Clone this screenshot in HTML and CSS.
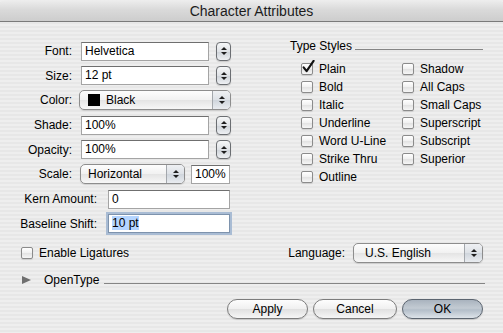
FILE: index.html
```html
<!DOCTYPE html>
<html lang="en">
<head>
    <meta charset="UTF-8">
    <title>Character Attributes</title>
    <link rel="stylesheet" href="styles.css">
</head>
<body>
    <div class="window">
        <div class="titlebar">Character Attributes</div>

        <div class="content">
            <div class="top">
                <!-- left: text attributes -->
                <div class="fields">
                    <div class="row">
                        <span class="lbl">Font:</span>
                        <div class="input main">Helvetica</div>
                        <span class="stepper"><span class="updown"></span></span>
                    </div>
                    <div class="row">
                        <span class="lbl">Size:</span>
                        <div class="input main">12 pt</div>
                        <span class="stepper"><span class="updown"></span></span>
                    </div>
                    <div class="row">
                        <span class="lbl">Color:</span>
                        <div class="popup color">
                            <span class="popup-label"><span class="swatch"></span>Black</span>
                            <span class="popup-arrows"><span class="updown"></span></span>
                        </div>
                    </div>
                    <div class="row">
                        <span class="lbl">Shade:</span>
                        <div class="input main">100%</div>
                        <span class="stepper"><span class="updown"></span></span>
                    </div>
                    <div class="row">
                        <span class="lbl">Opacity:</span>
                        <div class="input main">100%</div>
                        <span class="stepper"><span class="updown"></span></span>
                    </div>
                    <div class="row">
                        <span class="lbl">Scale:</span>
                        <div class="popup scale">
                            <span class="popup-label">Horizontal</span>
                            <span class="popup-arrows"><span class="updown"></span></span>
                        </div>
                        <div class="input small">100%</div>
                    </div>
                    <div class="row">
                        <span class="lbl long">Kern Amount:</span>
                        <div class="input long">0</div>
                    </div>
                    <div class="row">
                        <span class="lbl long">Baseline Shift:</span>
                        <div class="input long focused"><span class="selected">10 pt</span></div>
                    </div>
                </div>

                <!-- right: type styles -->
                <div class="styles">
                    <div class="group-title">
                        <span>Type Styles</span>
                        <span class="rule"></span>
                    </div>
                    <div class="checks">
                        <div class="check">
                            <span class="box">
                                <svg class="tick" width="15" height="15" viewBox="0 0 15 15">
                                    <path d="M2.6 7.4 L5.6 11.2 L12.6 0.8" fill="none" stroke="#111" stroke-width="2.1" stroke-linecap="round" stroke-linejoin="round"/>
                                </svg>
                            </span>Plain
                        </div>
                        <div class="check"><span class="box"></span>Bold</div>
                        <div class="check"><span class="box"></span>Italic</div>
                        <div class="check"><span class="box"></span>Underline</div>
                        <div class="check"><span class="box"></span>Word U-Line</div>
                        <div class="check"><span class="box"></span>Strike Thru</div>
                        <div class="check"><span class="box"></span>Outline</div>
                        <div class="check"><span class="box"></span>Shadow</div>
                        <div class="check"><span class="box"></span>All Caps</div>
                        <div class="check"><span class="box"></span>Small Caps</div>
                        <div class="check"><span class="box"></span>Superscript</div>
                        <div class="check"><span class="box"></span>Subscript</div>
                        <div class="check"><span class="box"></span>Superior</div>
                    </div>
                </div>
            </div>

            <div class="options">
                <div class="check ligatures"><span class="box"></span>Enable Ligatures</div>
                <div class="language">
                    <span class="lang-lbl">Language:</span>
                    <div class="popup lang">
                        <span class="popup-label">U.S. English</span>
                        <span class="popup-arrows"><span class="updown"></span></span>
                    </div>
                </div>
            </div>

            <div class="disclosure">
                <span class="triangle"></span>
                <span>OpenType</span>
                <span class="rule"></span>
            </div>

            <div class="buttons">
                <button class="btn apply">Apply</button>
                <button class="btn cancel">Cancel</button>
                <button class="btn default">OK</button>
            </div>
        </div>
    </div>
</body>
</html>
```

FILE: styles.css
```css
body {
    margin: 0;
    background: #fff;
    font-family: "Lucida Grande", "Liberation Sans", Arial, sans-serif;
    font-size: 12px;
    color: #000;
}

.window {
    width: 503px;
    height: 333px;
    overflow: hidden;
    background: repeating-linear-gradient(180deg, #eeeeee 0, #eeeeee 2px, #e7e7e7 2px, #e7e7e7 4px);
}

.titlebar {
    height: 21px;
    line-height: 22px;
    border-bottom: 1px solid #7a7a7a;
    border-radius: 5px 5px 0 0;
    background: linear-gradient(#eeeeee, #dadada 45%, #cdcdcd);
    text-align: center;
    font-size: 14px;
    color: #1c1c1c;
}

.content {
    padding: 19px 20px 0 20px;
}

.top {
    display: flex;
    justify-content: space-between;
}

/* left column */
.fields {
    display: flex;
    flex-direction: column;
    row-gap: 4.7px;
    width: 211px;
}

.row {
    display: flex;
    align-items: center;
    height: 20px;
}

.lbl {
    flex: none;
    width: 52px;
    margin-right: 9px;
    text-align: right;
}

.lbl.long {
    width: 77px;
    margin-right: 11px;
}

.input {
    box-sizing: border-box;
    height: 19px;
    line-height: 17px;
    padding: 0 3px;
    background: #fff;
    border: 1px solid #a4a4a4;
    border-top-color: #6f6f6f;
    white-space: nowrap;
}

.input.main { width: 128px; }
.input.small { width: 39px; margin-left: 6px; }
.input.long { width: 122px; }

.input.focused {
    border-color: #7e93ad;
    box-shadow: 0 0 0 2px #a9bcd4;
}

.selected {
    background: #b5d5ff;
}

.stepper {
    box-sizing: border-box;
    width: 15px;
    height: 19px;
    margin-left: 7px;
    display: flex;
    align-items: center;
    justify-content: center;
    border: 1px solid #6b6e72;
    border-radius: 4px;
    background: linear-gradient(#f6f7f8, #dfe2e6 50%, #cdd2d8 51%, #eef0f3);
    box-shadow: 0 1px 1px rgba(0,0,0,0.15);
}

/* up/down arrows shared by steppers and popups */
.updown {
    display: flex;
    flex-direction: column;
    align-items: center;
    gap: 2px;
}

.updown::before,
.updown::after {
    content: "";
    width: 0;
    height: 0;
    border-left: 3px solid transparent;
    border-right: 3px solid transparent;
}

.updown::before { border-bottom: 3px solid #1e1e1e; }
.updown::after { border-top: 3px solid #1e1e1e; }

.popup {
    box-sizing: border-box;
    height: 20px;
    display: flex;
    align-items: stretch;
    border: 1px solid #8d8d8d;
    border-radius: 5px;
    background: linear-gradient(#fdfdfd, #f1f1f1 50%, #e4e4e4 51%, #f7f7f7);
    box-shadow: 0 1px 1px rgba(0,0,0,0.12);
}

.popup-label {
    flex: 1;
    display: flex;
    align-items: center;
    padding-left: 7px;
    white-space: nowrap;
}

.popup-arrows {
    width: 17px;
    display: flex;
    align-items: center;
    justify-content: center;
    border-left: 1px solid #a3a7ac;
    border-radius: 0 4px 4px 0;
    background: linear-gradient(#eef0f3, #dde1e6 50%, #cfd5dc 51%, #e9ecf0);
}

.popup.color { width: 152px; margin-left: -2px; }
.popup.scale { width: 105px; margin-left: -1px; }
.popup.lang { width: 130px; }
.popup.lang .popup-label { padding-left: 11px; }

.swatch {
    width: 12px;
    height: 12px;
    background: #000;
    margin: 0 6px 0 1px;
}

/* right column */
.styles {
    width: 193px;
    margin-top: -2px;
}

.group-title {
    display: flex;
    align-items: baseline;
    height: 14px;
    line-height: 14px;
}

.group-title .rule {
    flex: 1;
    margin-left: 3px;
    border-bottom: 1px solid #858585;
}

.checks {
    display: grid;
    grid-template-rows: repeat(7, 18px);
    grid-template-columns: 101px auto;
    grid-auto-flow: column;
    margin-top: 7px;
    padding-left: 11px;
}

.check {
    display: flex;
    align-items: center;
    white-space: nowrap;
}

.box {
    flex: none;
    position: relative;
    box-sizing: border-box;
    width: 12px;
    height: 12px;
    margin-right: 6px;
    border: 1px solid #8b8b8b;
    border-radius: 2px;
    background: linear-gradient(#ffffff, #f0f0f0 50%, #e2e2e2 51%, #f6f6f6);
    box-shadow: 0 1px 1px rgba(0,0,0,0.12);
}

.tick {
    position: absolute;
    left: -1px;
    top: -4px;
}

/* bottom area */
.options {
    display: flex;
    justify-content: space-between;
    align-items: center;
    height: 20px;
    margin-top: 9px;
}

.ligatures {
    margin-left: 1px;
}

.language {
    display: flex;
    align-items: center;
}

.lang-lbl {
    margin-right: 8px;
}

.disclosure {
    display: flex;
    align-items: center;
    height: 20px;
    margin-top: 7px;
    margin-right: -2px;
}

.triangle {
    width: 0;
    height: 0;
    margin: 0 13px 0 2px;
    border-left: 9px solid #6f6f6f;
    border-top: 4.5px solid transparent;
    border-bottom: 4.5px solid transparent;
}

.disclosure .rule {
    flex: 1;
    height: 1px;
    margin: 7px 0 0 5px;
    background: #858585;
}

.buttons {
    display: flex;
    justify-content: flex-end;
    gap: 5px;
    margin-top: 9px;
}

.btn {
    box-sizing: border-box;
    height: 20px;
    padding: 0;
    font-family: inherit;
    font-size: 12px;
    line-height: 18px;
    color: #000;
    border: 1px solid #7c7c7c;
    border-radius: 10px;
    background: linear-gradient(#fdfdfd, #f0f0f0 50%, #e0e0e0 51%, #f6f6f6);
    box-shadow: 0 1px 1px rgba(0,0,0,0.15);
}

.btn.apply { width: 81px; }
.btn.cancel { width: 84px; }
.btn.default {
    width: 81px;
    border-color: #5c6570;
    background: linear-gradient(#a9b3be, #c3cbd3 45%, #b3bec9 55%, #dde3e9);
}
```
